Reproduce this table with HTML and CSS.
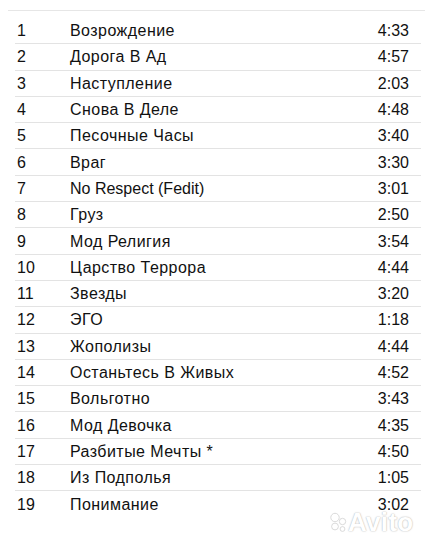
FILE: index.html
```html
<!DOCTYPE html>
<html lang="ru">
<head>
<meta charset="utf-8">
<link rel="stylesheet" href="styles.css">
</head>
<body>
<div class="page">
  <ol class="tracks">
    <li class="track"><span class="num">1</span><span class="title">Возрождение</span><span class="dur">4:33</span></li>
    <li class="track"><span class="num">2</span><span class="title">Дорога В Ад</span><span class="dur">4:57</span></li>
    <li class="track"><span class="num">3</span><span class="title">Наступление</span><span class="dur">2:03</span></li>
    <li class="track"><span class="num">4</span><span class="title">Снова В Деле</span><span class="dur">4:48</span></li>
    <li class="track"><span class="num">5</span><span class="title">Песочные Часы</span><span class="dur">3:40</span></li>
    <li class="track"><span class="num">6</span><span class="title">Враг</span><span class="dur">3:30</span></li>
    <li class="track"><span class="num">7</span><span class="title latin">No Respect (Fedit)</span><span class="dur">3:01</span></li>
    <li class="track"><span class="num">8</span><span class="title">Груз</span><span class="dur">2:50</span></li>
    <li class="track"><span class="num">9</span><span class="title">Мод Религия</span><span class="dur">3:54</span></li>
    <li class="track"><span class="num">10</span><span class="title">Царство Террора</span><span class="dur">4:44</span></li>
    <li class="track"><span class="num">11</span><span class="title">Звезды</span><span class="dur">3:20</span></li>
    <li class="track"><span class="num">12</span><span class="title">ЭГО</span><span class="dur">1:18</span></li>
    <li class="track"><span class="num">13</span><span class="title">Жополизы</span><span class="dur">4:44</span></li>
    <li class="track"><span class="num">14</span><span class="title">Останьтесь В Живых</span><span class="dur">4:52</span></li>
    <li class="track"><span class="num">15</span><span class="title">Вольготно</span><span class="dur">3:43</span></li>
    <li class="track"><span class="num">16</span><span class="title">Мод Девочка</span><span class="dur">4:35</span></li>
    <li class="track"><span class="num">17</span><span class="title">Разбитые Мечты *</span><span class="dur">4:50</span></li>
    <li class="track"><span class="num">18</span><span class="title">Из Подполья</span><span class="dur">1:05</span></li>
    <li class="track"><span class="num">19</span><span class="title">Понимание</span><span class="dur">3:02</span></li>
  </ol>
  <div class="watermark">
    <svg class="wm-dots" width="17" height="21" viewBox="0 0 17 21">
      <circle cx="5" cy="5.5" r="4.2"/>
      <circle cx="12.5" cy="9.5" r="3.2"/>
      <circle cx="5" cy="14.5" r="3.4"/>
      <circle cx="12.5" cy="17" r="2.4"/>
    </svg>
    <span class="wm-text">Avito</span>
  </div>
</div>
</body>
</html>
```
FILE: styles.css
```css
html, body {
  margin: 0;
  padding: 0;
  background: #ffffff;
}
.page {
  position: relative;
  width: 436px;
  height: 540px;
  font-family: "Liberation Sans", Arial, sans-serif;
  font-size: 16px;
  color: #111111;
}
.tracks {
  list-style: none;
  margin: 10px 11px 0 8px;
  padding: 7px 0 0 0;
  border-top: 1px solid #e6e6e6;
}
.track {
  display: flex;
  align-items: center;
  height: 26.3px;
  box-sizing: border-box;
  margin: 0 4px 0 7px;
  padding: 1px 12px 0 2px;
  border-bottom: 1px solid #e3e3e3;
}
.track:last-child {
  border-bottom: none;
}
.num {
  width: 53px;
  flex: none;
}
.title {
  flex: 1;
  letter-spacing: 0.45px;
}
.title.latin {
  letter-spacing: 0;
}
.dur {
  flex: none;
}
.watermark {
  position: absolute;
  left: 330px;
  top: 498px;
  display: flex;
  align-items: center;
  gap: 1px;
}
.wm-dots circle {
  fill: #ffffff;
  stroke: #d0d0d0;
  stroke-width: 0.8;
}
.wm-text {
  font-family: "Liberation Sans", Arial, sans-serif;
  font-weight: bold;
  font-size: 26px;
  line-height: 28px;
  color: #ffffff;
  letter-spacing: 0.3px;
  text-shadow: 0 0 1px #b8b8b8, 0 0 2px #cccccc;
}
```
